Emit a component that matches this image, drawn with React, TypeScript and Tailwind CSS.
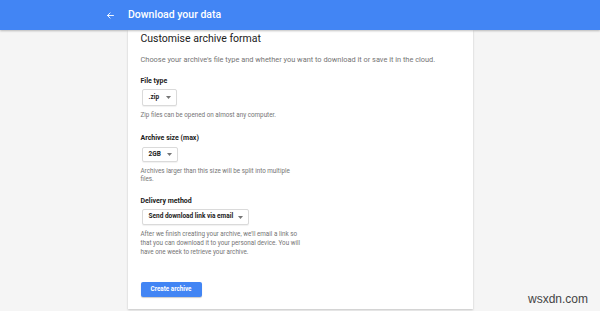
import { FC } from "react";

const Caret: FC = () => (
  <svg width="5" height="3" viewBox="0 0 5 3" className="text-[#757575]">
    <path d="M0 0h5L2.5 3z" fill="currentColor" />
  </svg>
);

const Select: FC<{ label: string; w: string; h: string }> = ({ label, w, h }) => (
  <div
    className={`ml-[1px] ${w} ${h} flex items-center justify-between pl-[6px] pr-[5px] bg-white border border-[#dadada] rounded-[2px] shadow-[0_1px_1px_rgba(0,0,0,0.06)]`}
  >
    <span className="text-[6.5px] font-bold text-[#212121]">{label}</span>
    <Caret />
  </div>
);

const App: FC = () => {
  return (
    <div
      className="relative w-full h-[311px] overflow-hidden bg-[#f5f5f5]"
      style={{ fontFamily: "Roboto, 'Noto Sans', sans-serif" }}
    >
      {/* Header */}
      <header className="relative z-10 h-[30px] bg-[#4285f4] flex items-center pl-[106px] shadow-[0_1px_2px_rgba(0,0,0,0.25)]">
        <svg width="9" height="9" viewBox="0 0 24 24" fill="none" stroke="white" strokeWidth="2.4" strokeLinecap="round">
          <path d="M20 12H4M11 5l-7 7 7 7" />
        </svg>
        <span className="ml-[13px] text-[10.5px] font-medium text-white">Download your data</span>
      </header>

      {/* Card */}
      <div className="mx-auto w-[345px] bg-white shadow-[0_1px_2px_rgba(0,0,0,0.2)] pl-[13px] pt-[2px] pb-[11px]">
        <div className="text-[10.5px] leading-[14px] text-[#212121]">Customise archive format</div>
        <div className="mt-[9px] text-[7.4px] leading-[9px] text-[#757575]">
          Choose your archive's file type and whether you want to download it or save it in the cloud.
        </div>

        <div className="mt-[13px] text-[7px] leading-[9px] font-bold text-[#212121]">File type</div>
        <div className="mt-[3px]">
          <Select label=".zip" w="w-[35px]" h="h-[17px]" />
        </div>
        <div className="mt-[5px] text-[6.3px] leading-[8px] text-[#757575]">
          Zip files can be opened on almost any computer.
        </div>

        <div className="mt-[15px] text-[7px] leading-[9px] font-bold text-[#212121]">Archive size (max)</div>
        <div className="mt-[4px]">
          <Select label="2GB" w="w-[36px]" h="h-[15px]" />
        </div>
        <div className="mt-[5px] w-[160px] text-[6.3px] leading-[8px] text-[#757575]">
          Archives larger than this size will be split into multiple files.
        </div>

        <div className="mt-[14px] text-[7px] leading-[9px] font-bold text-[#212121]">Delivery method</div>
        <div className="mt-[3px]">
          <Select label="Send download link via email" w="w-[107px]" h="h-[16px]" />
        </div>
        <div className="mt-[5px] w-[165px] text-[6.3px] leading-[9px] text-[#757575]">
          After we finish creating your archive, we'll email a link so that you can download it to your personal
          device. You will have one week to retrieve your archive.
        </div>

        <button className="mt-[25px] w-[61px] h-[15px] bg-[#4285f4] rounded-[2px] text-[6.3px] font-bold text-white shadow-[0_1px_1px_rgba(0,0,0,0.2)]">
          Create archive
        </button>
      </div>

      {/* Watermark */}
      <div
        className="absolute right-[12px] bottom-[3px] text-[12px] text-[#444]"
        style={{ fontFamily: "'Liberation Sans', sans-serif" }}
      >
        wsxdn.com
      </div>
    </div>
  );
};

export default App;
